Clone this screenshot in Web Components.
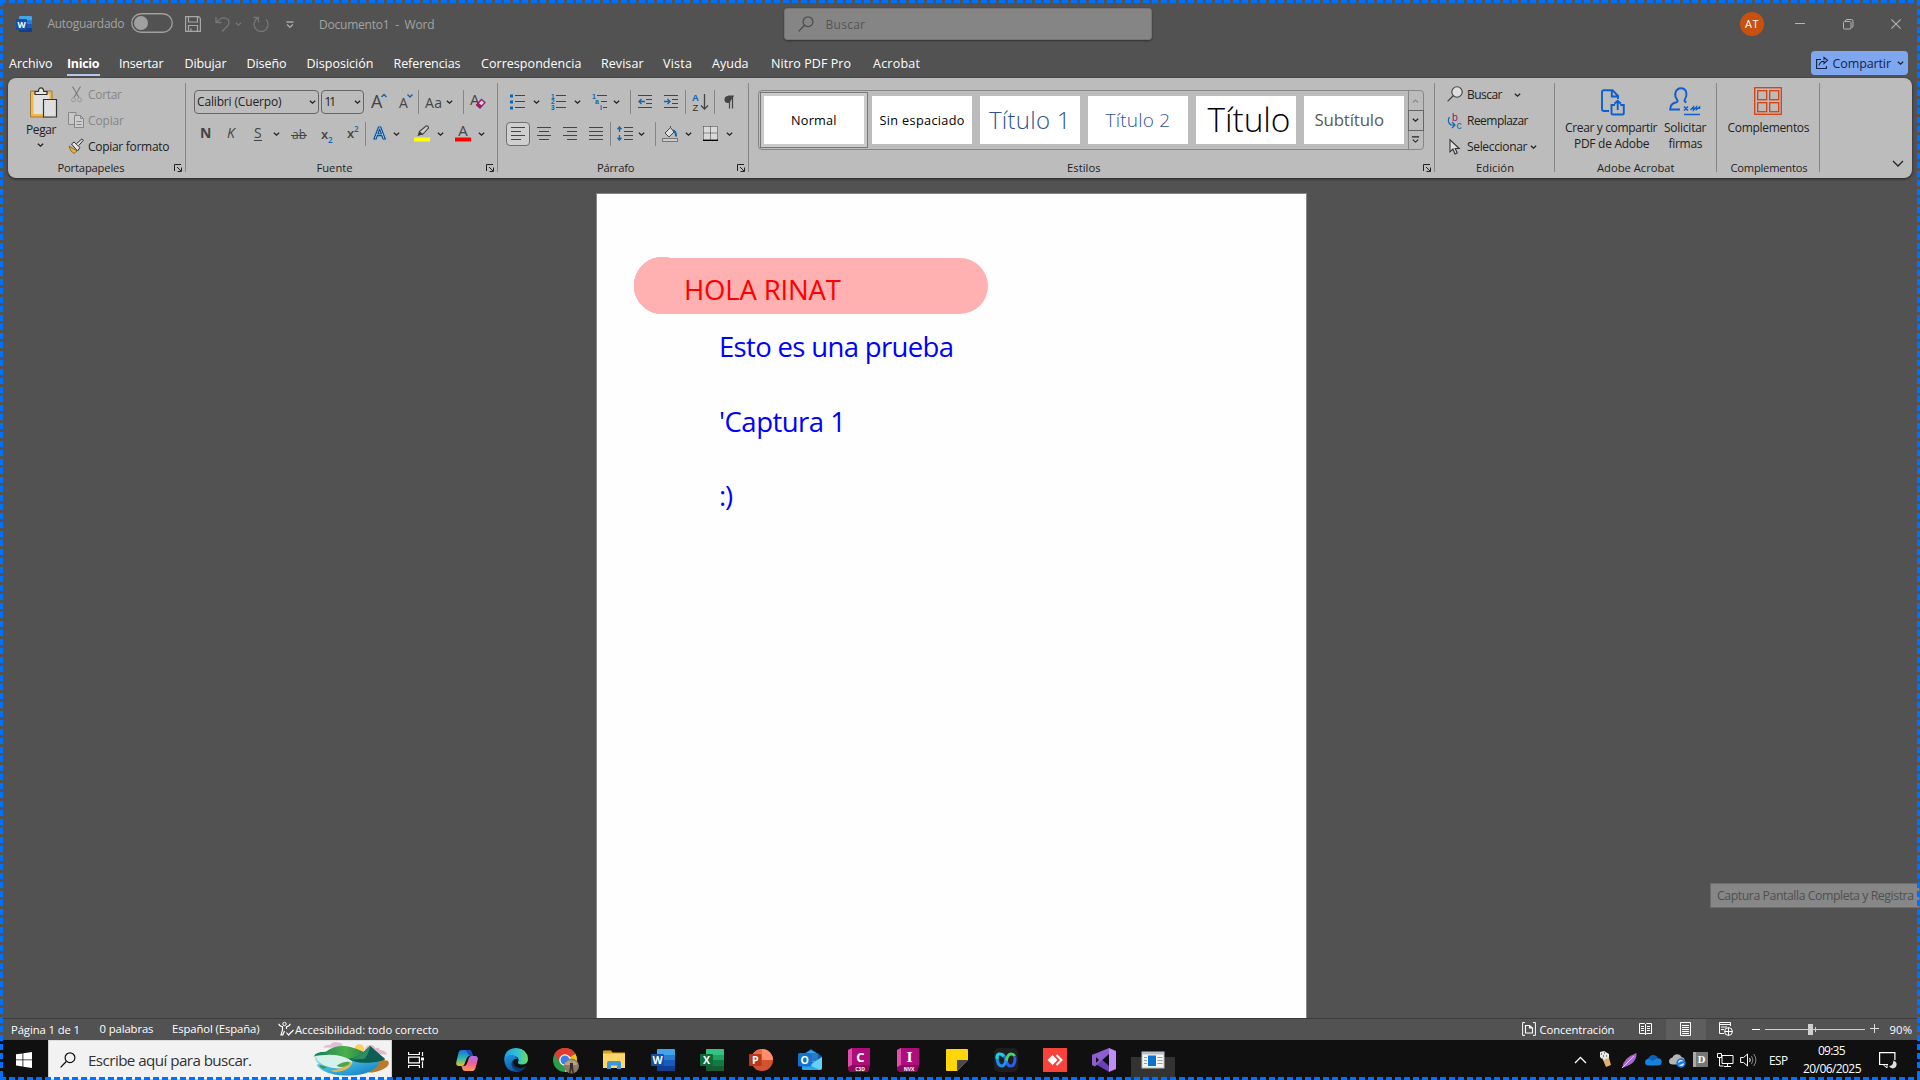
<!DOCTYPE html>
<html lang="es">
<head>
<meta charset="utf-8">
<title>Documento1 - Word</title>
<style>
html,body{margin:0;height:100%;overflow:hidden;background:#525252;font-family:"Open Sans","Noto Sans",sans-serif}
</style>
</head>
<body>
<word-desktop></word-desktop>
<script>
// ---------- text that is tracked to a given width ----------
customElements.define('ui-text', class extends HTMLElement {
  connectedCallback() {
    if (this.shadowRoot) return;
    const w = +this.getAttribute('w'), s = this.getAttribute('s') || 12;
    this.attachShadow({mode: 'open'}).innerHTML =
      `<style>:host{display:block;flex:none;width:${w}px;font-size:${s}px;line-height:1.36;white-space:nowrap}span{display:inline-block}</style><span><slot></slot></span>`;
    const sp = this.shadowRoot.querySelector('span'), n = this.textContent.length;
    const nat = sp.getBoundingClientRect().width;
    if (n > 1) sp.style.letterSpacing = ((w - nat) / (n - 1)).toFixed(3) + 'px';
  }
});

// ---------- icons ----------
const office = (dark, mid, light, lt, ch) => `<rect x="6" y="1" width="18" height="22" rx="1" fill="${mid}"/><path d="M6 2a1 1 0 0 1 1-1h16a1 1 0 0 1 1 1v5H6z" fill="${lt}"/><path d="M6 7h18v5H6z" fill="${light}"/><path d="M6 18h18v4a1 1 0 0 1-1 1H7a1 1 0 0 1-1-1z" fill="${dark}"/><rect x="0" y="6" width="13" height="12" rx="1" fill="${mid}"/><rect x="0" y="6" width="13" height="12" rx="1" fill="#000" opacity=".12"/><text x="6.5" y="15.8" font-size="10.5" font-weight="700" fill="#fff" text-anchor="middle">${ch}</text>`;
const lines = (a) => a.map(([x1, x2, y]) => `<path d="M${x1} ${y}.5H${x2}" stroke="#444"/>`).join('');
const ICONS = {
  chev: [8, 5, `<path d="M1 .8 4 3.6 7 .8" fill="none" stroke="currentColor" stroke-width="1.5"/>`],
  chevup: [8, 5, `<path d="M1 4 4 1.2 7 4" fill="none" stroke="currentColor" stroke-width="1.2"/>`],
  bigchev: [12, 7, `<path d="M1 1l5 5 5-5" fill="none" stroke="#222" stroke-width="1.3"/>`],
  traychev: [13, 8, `<path d="M1 7l5.5-5.5L12 7" fill="none" stroke="#fff" stroke-width="1.3"/>`],
  launch: [8, 8, `<path d="M.5 7V.5H7M3 3l4 4M7.5 3.5v4h-4" fill="none" stroke="#222"/>`],
  word: [24, 24, office('#103f91', '#185abd', '#2b7cd3', '#41a5ee', 'W')],
  wordsm: [16, 16, `<path d="M4 0h11q1 0 1 1v4H3V1q0-1 1-1z" fill="#41a5ee"/><path d="M3 4h13v4H3z" fill="#2b7cd3"/><path d="M3 8h13v4H3z" fill="#185abd"/><path d="M3 12h13v3q0 1-1 1H4q-1 0-1-1z" fill="#103f91"/><rect y="3" width="11" height="11" rx="1" fill="#1450a8"/><text x="5.500" y="11.500" font-size="8.500" font-weight="700" fill="#fff" text-anchor="middle">W</text>`],
  excel: [24, 24, office('#185c37', '#107c41', '#21a366', '#33c481', 'X')],
  toggle: [42, 20, `<rect x=".75" y=".75" width="40.5" height="18.5" rx="9.25" fill="none" stroke="#a0a0a0" stroke-width="1.3"/><circle cx="10" cy="10" r="7" fill="#a0a0a0"/>`],
  save: [16, 16, `<path d="M.6.6h13l1.8 1.8v13H.6zM3.5.6v5.4h9V.6M3.5 15.4V9.500h9v5.900M6 12.500v2.500" fill="none" stroke="#a8a8a8" stroke-width="1.2"/>`],
  undo: [15, 16, `<path d="M1 1v5.500h5.500M1.400 6.300C4 3 8 .8 11.500 2.500 15 4.300 14.500 8 12 10.500L7 15.500" fill="none" stroke="#777" stroke-width="1.3"/>`],
  redo: [17, 17, `<path d="M1.500 1.500h5v5M14 3.500a7 7 0 1 1-8-1.300" fill="none" stroke="#777" stroke-width="1.3"/>`],
  custom: [8, 7, `<path d="M.5 1h7M1 3.500 4 6.300 7 3.500" fill="none" stroke="#a8a8a8" stroke-width="1.3"/>`],
  mag: [16, 16, `<circle cx="10" cy="5.700" r="4.900" fill="none" stroke="currentColor" stroke-width="1.200"/><path d="M6.500 9.300.600 15.400" stroke="currentColor" stroke-width="1.300"/>`],
  magfill: [16, 16, `<circle cx="10" cy="6" r="5.200" fill="#dedede" stroke="#444" stroke-width="1.100"/><path d="M6.200 9.800.600 15.400" stroke="#444" stroke-width="1.300"/>`],
  min: [10, 10, `<path d="M0 4.500h10" stroke="#b5b5b5"/>`],
  max: [11, 11, `<path d="M2.500 2.500V2Q2.500.5 4 .5h4.500q1.500 0 1.500 1.500v5Q10 8.500 8.500 8.500M.5 3.500Q.5 2.500 1.500 2.500H6.500q1.500 0 1.500 1V9q0 1-1 1h-5.500Q.5 10 .5 9z" fill="none" stroke="#b5b5b5"/>`],
  close: [10, 10, `<path d="M.3.300 9.700 9.700M9.700.3.300 9.700" stroke="#b5b5b5" stroke-width="1.100"/>`],
  share: [12, 12, `<path d="M5 2.500H.6v9h9.800V9M3 8.500C3.500 5.500 5 4.200 8 4.200V6.500L11.500 3.300 8 .5v2.200" fill="none" stroke="#16233f" stroke-width="1.100"/>`],
  paste: [28, 31, `<path d="M2 5.500h19v23H2z" fill="#e1e1e1" stroke="#f2b84b" stroke-width="3"/><path d="M.5 4h21.500v26H.5z" fill="none" stroke="#8b6a2a" stroke-width=".8"/><path d="M5 7.500V4.500h3.500Q8.500.8 11 .8t2.700 3.700H17v3z" fill="#e6e6e6" stroke="#333" stroke-width="1.200"/><path d="M13.500 12.500h13v17.500h-13z" fill="#dedede" stroke="#333" stroke-width="1.200"/>`],
  cut: [11, 17, `<path d="M1.500.5 8 11.500M9.500.5 3 11.500" stroke="#777" stroke-width="1.100"/><circle cx="2.500" cy="13.800" r="2" fill="none" stroke="#999"/><circle cx="8.500" cy="13.800" r="2" fill="none" stroke="#999"/>`],
  copy: [16, 16, `<path d="M6.500 12.500h-6V.5h7.500v3" fill="#c8c8c8" stroke="#888"/><path d="M6.500 3.500h6l3 3v9h-9z" fill="#ccc" stroke="#888"/><path d="M12.500 3.500v3h3M8.500 9.500h5M8.500 12.500h5" fill="none" stroke="#888"/>`],
  brush: [16, 16, `<path d="M1 8 9 13 6 15.500Q2 13.500 1 8z" fill="#f0b030" stroke="#7a5a1a" stroke-width=".8"/><path d="M3.500 6 6 4l6 5.500-2.500 3.500z" fill="#e6e6e6" stroke="#333"/><path d="M8.500 5.700 14 .8l1.400 1.400-4.600 5.300" fill="#ddd" stroke="#333"/>`],
  grow: [16, 15, `<text x="0" y="14.500" font-size="18" fill="#444" textLength="11">A</text><path d="M10.500 4 13 1.500 15.500 4" fill="none" stroke="#0f64b0" stroke-width="1.400"/>`],
  shrink: [14, 15, `<text x="0" y="14.500" font-size="14" fill="#444">A</text><path d="M8.500 1.500 11 4l2.500-2.500" fill="none" stroke="#0f64b0" stroke-width="1.400"/>`],
  aa: [17, 14, `<text x="0" y="12" font-size="14" fill="#444" textLength="17">Aa</text>`],
  clear: [16, 16, `<text x="0" y="12" font-size="15" fill="#444">A</text><path d="m6.500 12 5-5.500 3.500 3-5 5.500z" fill="#d8d8d8" stroke="#9b1b6e" stroke-width="1.300"/><path d="m6.500 12 2-2.200 3.500 3-2 2.200z" fill="#9b1b6e"/>`],
  bold: [12, 14, `<text x="0" y="12" font-size="14" font-weight="700" fill="#444">N</text>`],
  ital: [12, 14, `<text x="1" y="12" font-size="14" font-style="italic" fill="#444">K</text>`],
  under: [10, 16, `<text x="1" y="12" font-size="14" fill="#444">S</text><path d="M1 14.500h8" stroke="#444"/>`],
  strike: [16, 14, `<text x="1" y="12" font-size="12" fill="#444" textLength="14">ab</text><path d="M0 8.500h16" stroke="#444"/>`],
  sub: [13, 16, `<text x="0" y="11.500" font-size="13" font-weight="600" fill="#444">x</text><text x="7" y="16" font-size="8" font-weight="600" fill="#0f64b0">2</text>`],
  sup: [13, 16, `<text x="0" y="14" font-size="13" font-weight="600" fill="#444">x</text><text x="7" y="7.500" font-size="8" font-weight="600" fill="#0f64b0">2</text>`],
  effect: [17, 16, `<text x="7.500" y="14" font-size="17" text-anchor="middle" font-weight="600" fill="#d8e8f6" stroke="#0f4f90" stroke-width="1.200" style="filter:drop-shadow(0 0 1px #7fc0f4)">A</text>`],
  hilite: [16, 17, `<rect y="12.500" width="16" height="4" fill="#ff0"/><path d="M3.500 11 5 6.500l3.500 3z" fill="#333"/><path d="M5.500 6.500 12 1q2.500-.5 2.500 2L8.500 9.500z" fill="#ccc" stroke="#444" stroke-width="1.100"/>`],
  fcolor: [16, 17, `<text x="8" y="11" font-size="15" text-anchor="middle" fill="#444">A</text><rect y="12.500" width="16" height="4" fill="#f00"/>`],
  bullets: [16, 16, `<path d="M0 .5h3v3H0zM0 6.500h3v3H0zM0 12.500h3v3H0z" fill="#0f64b0"/>` + lines([[5, 15, 1], [5, 15, 7], [5, 15, 13]])],
  numbers: [16, 16, `<g font-size="6.500" font-family="Liberation Sans" font-weight="700" fill="#0f64b0"><text x="0" y="4.500">1</text><text x="0" y="10.300">2</text><text x="0" y="16">3</text></g>` + lines([[5, 15, 1], [5, 15, 7], [5, 15, 13]])],
  multi: [16, 16, `<g font-size="7" font-family="Liberation Sans" font-weight="700" fill="#0f64b0"><text x="0" y="4.500">1</text><text x="3" y="10.300">a</text><text x="8" y="16">i</text></g>` + lines([[5, 15, 1], [9, 15, 7], [11, 15, 13]])],
  outdent: [15, 15, lines([[0, 14, 1], [8, 14, 5], [8, 14, 9], [0, 14, 13]]) + `<path d="M7 7.500H1M3.500 5 1 7.500 3.500 10" fill="none" stroke="#0f64b0" stroke-width="1.300"/>`],
  indent: [15, 15, lines([[0, 14, 1], [8, 14, 5], [8, 14, 9], [0, 14, 13]]) + `<path d="M0 7.500h6M3.500 5 6 7.500 3.500 10" fill="none" stroke="#0f64b0" stroke-width="1.300"/>`],
  sort: [17, 18, `<text x="0" y="7.500" font-size="9.500" font-family="Liberation Sans" font-weight="700" fill="#0f64b0">A</text><text x="0.500" y="17.500" font-size="9.500" font-family="Liberation Sans" fill="#333">Z</text><path d="M12.500 1v15M9 12.500l3.500 3.500 3.500-3.500" fill="none" stroke="#444" stroke-width="1.300"/>`],
  pilcrow: [11, 14, `<path d="M9.500 1H4a3.500 3.500 0 0 0 0 7h1.500" fill="#444"/><path d="M5.500 1v12.500M8.500 1v12.500M4 1h6" stroke="#444" stroke-width="1.200"/>`],
  al: [15, 15, lines([[0, 14, 1], [0, 10, 5], [0, 14, 9], [0, 10, 13]])],
  ac: [15, 15, lines([[0, 14, 1], [2, 12, 5], [0, 14, 9], [2, 12, 13]])],
  ar: [15, 15, lines([[0, 14, 1], [4, 14, 5], [0, 14, 9], [4, 14, 13]])],
  aj: [15, 15, lines([[0, 14, 1], [0, 14, 5], [0, 14, 9], [0, 14, 13]])],
  spacing: [17, 15, lines([[7, 16, 1], [7, 16, 5], [7, 16, 9], [7, 16, 13]]) + `<path d="M2.500 1v5M.5 3.200 2.500 1l2 2.200M2.500 9v5M.5 11.800l2 2.200 2-2.200" fill="none" stroke="#0f64b0" stroke-width="1.300"/>`],
  shade: [17, 16, `<rect x=".5" y="12.500" width="15" height="3" fill="#ccc" stroke="#777"/><path d="M3 7 8.500 1.500 12 6 7 11z" fill="#ddd" stroke="#444"/><path d="M8.500 1.500V0" stroke="#444"/><path d="M11 4.500q3 .5 3 6" fill="none" stroke="#0f64b0" stroke-width="2"/>`],
  borders: [15, 15, `<rect width="15" height="14" fill="#d9d9d9"/><path d="M.5.500h14v13M.5.500v13M7.500.500v13M.5 7h14" fill="none" stroke="#333" stroke-dasharray="1 1"/><path d="M0 14.300h15" stroke="#000" stroke-width="1.400"/>`],
  expand: [10, 8, `<path d="M1 1h8M2 4l3 2.800L8 4" fill="none" stroke="#222" stroke-width="1.200"/>`],
  replace: [16, 16, `<text x="5" y="7.500" font-size="10.500" font-family="Liberation Sans" fill="#8f1d6b">b</text><text x="9.500" y="15.800" font-size="10.500" font-family="Liberation Sans" fill="#0f64b0">c</text><path d="M2.500 4q-3 4.500 1.500 8h3.500M5 9l3 3-3 3" fill="none" stroke="#0f64b0" stroke-width="1.200"/>`],
  cursor: [11, 16, `<path d="M1 .8v12l3-2.800 2 5 2.200-1-2-4.500h4z" fill="#e0e0e0" stroke="#333" stroke-width="1.100"/>`],
  adobe: [24, 27, `<path d="M8 22H3Q1 22 1 20V3Q1 1.200 3 1.200h8.500L17 7v3M10.800 1.500V7.500H17M14 16h-3.500v8.500Q10.500 25.500 12 25.500h9.500q1.300 0 1.300-1V16h-3.500M16.700 21v-9M13.500 14.800l3.200-3 3.200 3" fill="none" stroke="#0b5fd0" stroke-width="1.900"/>`],
  sign: [32, 29, `<path d="M11 22.500H1.200Q1 16.500 7.500 15.200 9.500 14.500 7.800 12.200 5.500 9 6.500 5.500 7.800 1.200 12 1.200t5.300 4.300q.8 3.500-1.400 6.700-1.300 2 1.500 3.200" fill="none" stroke="#0b5fd0" stroke-width="1.900"/><path d="M15 19.500l4 4M19 19.500l-4 4M21.500 23l3-3v3l3-3v2.500l3-2.500v2M15 27.500h16" fill="none" stroke="#0b5fd0" stroke-width="1.500"/>`],
  addins: [28, 28, `<g fill="none" stroke="#d8400c" stroke-width="1.300"><rect x=".7" y=".7" width="26.600" height="26.600"/><rect x="3.700" y="3.700" width="9" height="9"/><rect x="15.700" y="3.700" width="9" height="9"/><rect x="3.700" y="15.700" width="9" height="9"/><rect x="15.700" y="15.700" width="9" height="9"/></g>`],
  access: [16, 14, `<circle cx="6.500" cy="2" r="1.700" fill="none" stroke="#fff"/><path d="M.8 1.800Q1 4.200 4.500 4.800V8L3 12.800h1.800L6.500 9M12.200 1.800Q12 4.200 8.500 4.800V7M8.500 10.500l2 2.500 5-5" fill="none" stroke="#fff" stroke-width="1.200"/>`],
  focus: [14, 14, `<path d="M3 .6H.6v12.800H3M11 .6h2.400v12.800H11" fill="none" stroke="#fff"/><path d="M3.500 3.500h4l3 2.500v5h-7zM7.500 3.500V6h3" fill="none" stroke="#fff" stroke-width="1.200"/>`],
  book: [13, 12, `<path d="M6.500 1.500v10M.5.500h5l1 1 1-1h5v10h-5l-1 1-1-1h-5zM2 3.500h3M2 5.500h3M2 7.500h3M8 3.500h3M8 5.500h3M8 7.500h3" fill="none" stroke="#fff"/>`],
  print: [11, 14, `<path d="M.5.500h10v13H.5zM2 3.500h7M2 5.500h7M2 7.500h7M2 9.500h7M2 11.500h7" fill="none" stroke="#fff"/>`],
  web: [14, 14, `<path d="M5 11.500H.5V.5h11V4M.5 2.500h11M2 5h6M2 7.500h3" fill="none" stroke="#fff"/><circle cx="9.500" cy="9.500" r="3.900" fill="#525252" stroke="#fff"/><path d="M5.600 9.500h8M9.500 5.600v8" stroke="#fff"/>`],
  minus: [8, 8, `<path d="M0 4.500h8" stroke="#fff" stroke-width="1"/>`],
  plus: [9, 9, `<path d="M0 4.500h9M4.500 0v9" stroke="#ddd"/>`],
  slider: [100, 11, `<path d="M0 5.500h100" stroke="#d0d0d0"/><path d="M50.500 3v5" stroke="#d0d0d0"/><rect x="43" width="5" height="11" fill="#d0d0d0"/>`],
  start: [16, 16, `<path d="M0 2.300 6.500 1.400V7.500H0zM7.300 1.300 16 0v7.500H7.300zM0 8.300h6.500v6.200L0 13.600zM7.300 8.300H16V16l-8.700-1.300z" fill="#fff"/>`],
  taskview: [16, 16, `<path d="M.6 0v2.500h10.800V0M.6 16v-2.500h10.800V16M.6 5.200h10.800v5.600H.6zM14.500 0v4M14.500 9.500V16" fill="none" stroke="#fff" stroke-width="1.200"/><rect x="13" y="5.500" width="3" height="3" fill="#fff"/>`],
  island: [78, 36, `<defs><linearGradient id="a" x2="1" y2="1"><stop stop-color="#bfe8ea"/><stop offset=".45" stop-color="#3fb4de"/><stop offset="1" stop-color="#0b78c0"/></linearGradient><linearGradient id="b" x2="1"><stop stop-color="#0f7a5a"/><stop offset=".45" stop-color="#4bb04a"/><stop offset="1" stop-color="#0a5a4a"/></linearGradient></defs>
   <circle cx="47" cy="8" r="4.800" fill="#ffcf5a"/><path d="M10 6.500q3-3.500 7-2.500 3-4 8-2.500 5 0 5 3 3 .5 4 2.500z" fill="#e3bcd8"/><path d="M52 9q2-5 6-5 4 0 5 3 4-1 5 2 6 .5 7 5l-12-1z" fill="#e3b8cc"/>
   <path d="M62 18 76 20q3 4-4 8-8 4-16 4l4-12z" fill="#b97a2a"/>
   <path d="M2 15Q1 20 6 23q-3 1-2 2 8 9 28 10 22 0 30-7 6-3 4-8L40 17z" fill="url(#a)"/>
   <path d="M3 14.500q13-2 26 1.500 10 2 11 6-8 8-21 5Q4 24 3 14.500z" fill="#d6f0ea"/>
   <path d="M1 16Q2 11 13 11q10-8 25-5 8 2 13 5l7-6q9 8 15 13-8 4-22 4-8 0-13-3-10-5-21-5-10 0-17 2z" fill="url(#b)"/>
   <path d="M36 18q12-1 22-13l15 14q-8 3-20 3-11 0-17-4z" fill="#0d5e55"/><path d="M58 5q-2 9-6 13l-14 1Q50 14 58 5z" fill="#2c8f62"/>
   <path d="M25 25q6-4 12-4 3 0 2 3-3 5-12 7-7 1-9-1 10-1 12-4z" fill="#e4b65a"/><path d="M24 25q5-4 12-4 2 1 0 3-5 3-10 2z" fill="#4aa64a"/><path d="M6 24q5 1 9 3l-5 1q-3-1-4-4z" fill="#2f9a58"/>`],
  copilot: [22, 21, `<defs><linearGradient id="c" x2="0" y2="1"><stop stop-color="#1b6fe0"/><stop offset=".5" stop-color="#27b8b0"/><stop offset="1" stop-color="#e8c320"/></linearGradient><linearGradient id="d" x2="0" y2="1"><stop stop-color="#b06df0"/><stop offset=".5" stop-color="#f0609a"/><stop offset="1" stop-color="#ff9a4a"/></linearGradient></defs><path d="M5 0h8q2 0 2.500 2L17 6h-3.500q-2 0-2.700 2L8.500 14Q8 16 6 16H3Q-.5 16 .3 12L2.500 3Q3.200 0 5 0z" fill="url(#c)"/><path d="M17 21H9q-2 0-2.600-2L5.500 16H8q2 0 2.700-2L13 8q.6-2 2.500-2H19q3.500 0 2.700 4L19.500 18q-.8 3-2.500 3z" fill="url(#d)"/><path d="M9.500 0H13q2 0 2.500 2L17 6h-3.500z" fill="#1c4bb8"/>`],
  edge: [24, 24, `<defs><linearGradient id="e" x2="1"><stop stop-color="#1fa0e8"/><stop offset=".6" stop-color="#35c3d0"/><stop offset="1" stop-color="#6fdc50"/></linearGradient><linearGradient id="f" x2=".6" y2="1"><stop stop-color="#1f9ae0"/><stop offset="1" stop-color="#0c4d9c"/></linearGradient></defs><path d="M.3 10Q2 0 12.500 0 23.500 1 24 11q0 5.500-6.500 5.500-4 0-3.500-2.500 1.500-3-1-5Q9 6.500 4.500 8 1.500 9 .3 10z" fill="url(#e)"/><path d="M.1 11Q1 7 6.500 7q5.500 0 7 4-4.500-1-4.500 4 .5 5 6.500 5.500 3.500 0 6.300-2Q18 24 12 24 1 23.500.1 11z" fill="url(#f)"/><path d="M9.800 11.500q-3.300 3-1.800 7 2.500 4.500 8 4.500 4-1.500 6-4.500-3 1.500-6.500 1.500-6-1-6.500-5.500z" fill="#0a3672"/>`],
  chrome: [26, 26, `<circle cx="12" cy="12" r="12" fill="#2a9d4b"/><path d="M12 12 1.600 6A12 12 0 0 1 22.400 6z" fill="#e33b2e"/><path d="M12 12h0L22.400 6A12 12 0 0 1 12 24z" fill="#fbc116"/><path d="M12 6h10.400A12 12 0 0 0 1.600 6L7 15z" fill="#e33b2e"/><circle cx="12" cy="12" r="5.800" fill="#fff"/><circle cx="12" cy="12" r="4.500" fill="#3b7ded"/><circle cx="18.500" cy="18" r="7.500" fill="#8c7a66"/><path d="M12 15q6-6 12 0v2H12z" fill="#b3a590"/><path d="M17 15h3v4l1 6h-1.500l-1-4-1 4H16l1-6z" fill="#3b2a24"/><circle cx="18.500" cy="13.600" r="1.200" fill="#d77b3a"/>`],
  folder: [22, 19, `<path d="M0 1.500Q0 .5 1 .5h7l1.500 2H22V18H0z" fill="#e0a010"/><path d="M0 3.500h22V18H0z" fill="#ffd667"/><path d="M4 19v-6q0-2 2-2h10q2 0 2 2v6h-4v-3.500H8V19z" fill="#3d98dc"/>`],
  ppt: [24, 24, `<circle cx="13" cy="12" r="11" fill="#d35230"/><path d="M13 1a11 11 0 0 1 11 11H13z" fill="#ff8f6b"/><path d="M13 1A11 11 0 0 0 2 12h11z" fill="#ed6c47"/><rect y="6" width="12.500" height="12" rx="1" fill="#b8391a"/><text x="6.200" y="15.800" font-size="10.500" font-weight="700" fill="#fff" text-anchor="middle">P</text>`],
  outlook: [24, 24, `<path d="m3 8 10-7 10.500 7v5L13 18 3 13z" fill="#0f5fae"/><path d="M6 6 13 2l7 4v8H6z" fill="#32a7ea"/><path d="M13 5h8v8h-8z" fill="#1a4fa0" opacity=".5"/><path d="M24 9v11q0 2-2 2H6q-2 0-2-2l9-4z" fill="#5fd2f5"/><path d="m4 14 18 8H6q-2 0-2-2z" fill="#2fa4e8"/><rect y="5" width="13.500" height="13.500" rx="1.500" fill="#1173cf"/><text x="6.800" y="15.500" font-size="10.500" font-weight="700" fill="#fff" text-anchor="middle">O</text>`],
  c3d: [22, 24, `<path d="M0 2 4 0h18v18l-2 6H2L0 22z" fill="#8a0a5e"/><path d="M4 0h18v17H4z" fill="#b00d7c"/><path d="m0 2 4-2v17l-4 2z" fill="#e04fae"/><text x="12.500" y="13.500" font-size="13" font-weight="700" fill="#fff" text-anchor="middle">C</text><text x="12" y="22.500" font-size="5" font-weight="700" fill="#fff" text-anchor="middle">C3D</text>`],
  inv: [22, 24, `<path d="M0 2 4 0h18v18l-2 6H2L0 22z" fill="#8a0a5e"/><path d="M4 0h18v17H4z" fill="#b00d7c"/><path d="m0 2 4-2v17l-4 2z" fill="#e04fae"/><text x="12.500" y="13.500" font-size="13" font-family="DejaVu Serif" font-weight="700" fill="#fff" text-anchor="middle">I</text><text x="12" y="22.500" font-size="5" font-weight="700" fill="#fff" text-anchor="middle">NVX</text>`],
  sticky: [22, 22, `<path d="M0 1q0-1 1-1h20q1 0 1 1v10L11 22H1q-1 0-1-1z" fill="#ffd60a"/><path d="M11 11h11L11 22z" fill="#4a4a4a"/>`],
  webex: [24, 24, `<rect width="24" height="24" rx="5" fill="#1e1e1e"/><path d="M21 8.500q.5 9.500-4.500 9.500-3 0-4.500-5.500T8 6" fill="none" stroke="#2f5cf0" stroke-width="3"/><path d="M12 13.500q1.500-7.500 5-7.500 2.500 0 3.800 2" fill="none" stroke="#45d468" stroke-width="3"/><path d="M3 7.500Q3 18 7.800 18q2.700 0 4.200-5.500" fill="none" stroke="#1c8ff0" stroke-width="3"/><path d="M3.200 11Q2.500 6.500 5 6q3-.5 4.500 2.500" fill="none" stroke="#1ccfd8" stroke-width="3"/>`],
  anydesk: [24, 24, `<rect width="24" height="24" fill="#f8423a"/><path d="m4.500 12 5-5 5 5-5 5z" fill="#fff"/><path d="m13.500 7 5 5-5 5" fill="none" stroke="#fff" stroke-width="2"/>`],
  vs: [24, 24, `<path d="M0 7 3 5.500 17 18v6L2 15z" fill="#6b3fb5"/><path d="M0 7v10l3 1.500L17 6V0z" fill="#8b5fd0"/><path d="M4 9v6l3-3z" fill="#101010"/><path d="m17 0 7 3v18l-7 3z" fill="#c08df5"/><path d="M17 8v8l-5-4z" fill="#101010"/>`],
  appwin: [22, 16, `<rect width="22" height="16" fill="#f4f4f4" stroke="#bbb"/><path d="M0 0h22v2.500H0z" fill="#b9c0c6"/><rect x="6" y="3.500" width="8" height="10.500" fill="#0b73d0"/><path d="M2 5.500h3M2 8.500h3M2 11.500h3M15.500 5.500h5M15.500 8.500h5M15.500 11.500h5" stroke="#999"/>`],
  tray1: [14, 16, `<path d="M2 1 6 0l5 3v6l-5 1-4-4z" fill="#e9e9e9"/><path d="M3 3h1M6 2h1M5 5h1M8 5h1M4 8h1" stroke="#222"/><path d="M5 9 11 7l2 7-5 2z" fill="#e0b070"/>`],
  feather: [15, 15, `<path d="M0 15Q1 5 14.500 0 15 7 9 11 5 13.500 0 15z" fill="#a66bd0"/><path d="M0 15 12 3" stroke="#e0c0f5"/>`],
  onedrive: [17, 11, `<path d="M4 10.500Q0 10.500 0 7q.5-3 3.500-3.500Q5 .2 8.500.3q3 .2 4.200 3 4 .2 4 3.700-.3 3.500-4 3.500z" fill="#1583dc"/><path d="M3.500 3.500Q5 .2 8.500.3q3 .2 4.200 3L7 6z" fill="#0f5fb8"/>`],
  sync: [17, 14, `<path d="M4 10.500Q0 10.500 0 7q.5-3 3.500-3.500Q5 .2 8.500.3q3 .2 4.200 3 3 .2 3 3.700-.3 3.500-4 3.500z" fill="#b5b5b5"/><circle cx="12" cy="9" r="4.700" fill="#1b78d8"/><path d="M9.500 8.500q1-2.500 4-1.500M14.500 9.500q-1 2.500-4 1.500" fill="none" stroke="#fff" stroke-width="1.200"/>`],
  dtray: [15, 15, `<rect width="15" height="15" fill="#777"/><path d="M0 0h3v15H0z" fill="#aaa"/><text x="8.500" y="11" font-size="9" font-family="DejaVu Serif" font-weight="700" fill="#fff" text-anchor="middle">D</text>`],
  net: [17, 15, `<path d="M5 2.500h11v8H5zM10.500 10.500V13M7 13.500h7M.5.500h4v4h-4zM2.500 5v8h4" fill="none" stroke="#fff"/>`],
  speaker: [17, 14, `<path d="M.6 4.500h3L7.500 1v12L3.600 9.500h-3z" fill="none" stroke="#fff"/><path d="M9.500 5q1.500 2 0 4" fill="none" stroke="#fff"/><path d="M11.500 3q3 4 0 8M13.700 1q4.500 6 0 12" fill="none" stroke="#888"/>`],
  notif: [17, 17, `<path d="M9 12.500H.6V.6h15.300V8" fill="none" stroke="#fff" stroke-width="1.200"/><path d="M4 12.500 8 16v-3.500" fill="none" stroke="#fff"/><path d="M14.500 8.500a4 4 0 1 1-4.500 5.500q4 0 4.500-5.500z" fill="#ddd"/>`]
};
customElements.define('ui-icon', class extends HTMLElement {
  connectedCallback() {
    if (this.shadowRoot) return;
    const [vw, vh, body] = ICONS[this.getAttribute('n')], w = +this.getAttribute('w') || vw;
    this.attachShadow({mode: 'open'}).innerHTML =
      `<style>:host{display:block;flex:none;width:${w}px;height:${vh * w / vw}px}svg{display:block;overflow:visible}</style><svg width="${w}" height="${vh * w / vw}" viewBox="0 0 ${vw} ${vh}">${body}</svg>`;
  }
});

// ---------- row builders: every item flows after the previous one ----------
const T = (x, x2, t, s = 12, o = {}) => ({x: x - .5, w: x2 - x + 1.5, html: m => `<ui-text w="${x2 - x + 1.5}" s="${s}" style="${m};margin-top:${(o.dy || 0) * 2}px;color:${o.c || 'inherit'};font-weight:${o.b || 'inherit'}">${t}</ui-text>`});
const I = (x, n, o = {}) => { const w = o.w || ICONS[n][0]; return {x, w, html: m => `<ui-icon n="${n}" w="${w}" style="${m};margin-top:${(o.dy || 0) * 2}px;color:${o.c || '#222'}"></ui-icon>`}; };
const B = (x, w, h, css, inner = '') => ({x, w, html: m => `<div style="${m};flex:none;box-sizing:border-box;width:${w}px;height:${h}px;${css}">${inner}</div>`});
const S = x => B(x, 1, 24, 'background:#868686');
const row = (x0, h, items, css = '') => { let p = x0; return `<div class="row" style="height:${h}px;${css}">` + items.map(i => { const m = i.x - p; p = i.x + i.w; return i.html(`margin-left:${+m.toFixed(2)}px`); }).join('') + '</div>'; };
const base = `<style>:host{display:block;flex:none}.row{display:flex;align-items:center;flex:none}.col{display:flex;flex-direction:column;flex:none}</style>`;
const def = (name, fn) => customElements.define(name, class extends HTMLElement {
  connectedCallback() { if (!this.shadowRoot) this.attachShadow({mode: 'open'}).innerHTML = base + fn(this); }
});

def('title-bar', () => `<style>:host{color:#a3a3a3}</style>` + row(0, 48, [
  I(16, 'wordsm'), T(48, 123.5, 'Autoguardado', 12), I(131, 'toggle', {dy: -1}), I(185, 'save'), I(215, 'undo'), I(235, 'chev', {c: '#777', w: 7}), I(252, 'redo', {dy: .5}), I(285.500, 'custom'),
  T(319.500, 433.500, 'Documento1&nbsp; -&nbsp; Word', 12, {dy: 1}),
  B(784, 368, 32, 'background:#858585;border:1px solid #757575;border-radius:3px;box-shadow:0 1px 2px #333;color:#555', row(785, 30, [I(798, 'mag', {c: '#4a4a4a'}), T(826, 864, 'Buscar', 12, {dy: 1})])),
  B(1740, 24, 24, 'background:#ca5010;border-radius:50%;color:#fff', row(1740, 24, [T(1745.500, 1757.500, 'AT', 11)])),
  I(1795, 'min'), I(1843, 'max'), I(1891, 'close')
]));

def('tab-strip', () => `<style>:host{color:#fff}</style>` + row(0, 30, [
  T(9.500, 51.500, 'Archivo', 12.500, {dy: .5}),
  {x: 67, w: 33, html: m => `<div class="col" style="${m};width:33px;height:24px;box-sizing:border-box;padding-top:3px;margin-top:1px;border-bottom:2px solid #b4c7ee"><ui-text w="32.5" s="12.5" style="font-weight:700">Inicio</ui-text></div>`},
  ...[[119.500, 162.500, 'Insertar'], [185, 225.500, 'Dibujar'], [247, 285.500, 'Diseño'], [307, 372.500, 'Disposición'], [394, 459.500, 'Referencias'], [481.500, 580.500, 'Correspondencia'], [601.500, 642.500, 'Revisar'], [663.500, 691, 'Vista'], [712.500, 747.500, 'Ayuda'], [771.500, 850, 'Nitro PDF Pro'], [873.500, 919, 'Acrobat']].map(a => T(...a, 12.500, {dy: .5})),
  B(1811, 97, 24, 'background:#7fa7f0;border-radius:4px;color:#16233f', row(1811, 24, [I(1816, 'share'), T(1833, 1890, 'Compartir', 12.500), I(1897, 'chev', {w: 7})]))
]));

const foot = (x0, x1, x2, t, l) => row(x0, 16, [T(x1, x2, t, 11.200)].concat(l ? [I(l, 'launch')] : []));
const group = (x0, xe, body, f) => `<div class="col" style="width:${xe - x0}px;height:100px;box-sizing:border-box;padding-top:4px">${body}<div style="flex:1"></div>${f}<div style="height:2px"></div></div><div style="flex:none;width:1px;height:89px;margin-top:5px;background:#868686"></div>`;

const card = (x, x1, x2, t, s, o) => B(x, 100, 48, 'background:#fff;' + (o.sel ? 'box-shadow:0 0 0 3px #cacaca,0 0 0 4px #777;' : ''), row(x, 48, [T(x1, x2, t, s, o)]));

def('ribbon-panel', () => `<style>:host{margin:0 8px;height:100px;border-radius:8px;background:#bcbcbc;color:#222;box-shadow:0 1px 3px #222;display:flex}</style>` +
  group(8, 185,
    `<div class="row" style="align-items:flex-start"><div class="col" style="width:60px">
      ${row(8, 42, [I(30, 'paste', {dy: -.5})])}${row(8, 14, [T(26.500, 55.500, 'Pegar', 12, {dy: -1})])}${row(8, 14, [I(37, 'chev', {w: 7})])}</div>
     <div class="col">${row(68, 26, [I(71, 'cut', {dy: -.5}), T(88.500, 121, 'Cortar', 12, {c: '#868686'})])}${row(68, 26, [I(68, 'copy', {dy: -1}), T(88.500, 123, 'Copiar', 12, {c: '#868686'})])}${row(68, 26, [I(68, 'brush', {dy: -1}), T(88.500, 168.500, 'Copiar formato')])}</div></div>`,
    foot(8, 58, 123.500, 'Portapapeles', 174)) +
  group(186, 497,
    row(186, 32, [
      B(194, 125, 24, 'border:1px solid #666;border-radius:4px', row(195, 22, [T(197.500, 280.500, 'Calibri (Cuerpo)'), I(309, 'chev', {w: 7})])),
      B(321, 43, 24, 'border:1px solid #666;border-radius:4px', row(322, 22, [T(325, 335, '11'), I(354, 'chev', {w: 7})])),
      I(371, 'grow', {dy: -1.500}), I(399, 'shrink', {dy: -1.500}), S(418), I(425, 'aa', {dy: .5}), I(446, 'chev', {w: 7}), S(463), I(470, 'clear', {dy: -1})], 'margin-top:4px') +
    row(186, 32, [I(200, 'bold', {dy: -1}), I(226, 'ital', {dy: -1}), I(252.500, 'under'), I(273, 'chev', {w: 7}), I(291, 'strike'), I(321, 'sub', {dy: .5}), I(347, 'sup', {dy: -2}), S(365), I(372, 'effect', {dy: -1}), I(393, 'chev', {w: 7}), I(414, 'hilite', {dy: -.5}), I(437, 'chev', {w: 7}), I(455, 'fcolor', {dy: -.5}), I(478, 'chev', {w: 7})]),
    foot(186, 317, 351.500, 'Fuente', 486)) +
  group(498, 748,
    row(498, 32, [I(510, 'bullets'), I(533, 'chev', {w: 7}), I(551, 'numbers'), I(574, 'chev', {w: 7}), I(592, 'multi'), I(613, 'chev', {w: 7}), S(630), I(638, 'outdent', {dy: -.5}), I(664, 'indent', {dy: -.5}), S(685), I(692, 'sort'), S(714), I(723.500, 'pilcrow')], 'margin-top:4px') +
    row(498, 32, [B(506, 24, 24, 'border:1px solid #6e6e6e;border-radius:4px;background:#cfcfcf', row(507, 22, [I(511, 'al', {dy: -.5})])), I(537, 'ac', {dy: -.5}), I(563, 'ar', {dy: -.5}), I(589, 'aj', {dy: -.5}), S(610), I(617, 'spacing', {dy: -.5}), I(638, 'chev', {w: 7}), S(655), I(662, 'shade', {dy: -.5}), I(685, 'chev', {w: 7}), I(703, 'borders', {dy: -.5}), I(726, 'chev', {w: 7})]),
    foot(498, 597.500, 633.500, 'Párrafo', 737)) +
  group(749, 1434,
    row(749, 60, [
      B(758, 666, 60, 'border:1px solid #868686;border-radius:4px', row(759, 58, [
        card(764, 791.500, 835.500, 'Normal', 12.700, {sel: 1, c: '#000', dy: .5}), card(872, 880, 963.500, 'Sin espaciado', 12.700, {c: '#000', dy: .5}),
        card(980, 989.500, 1069.500, 'Título 1', 24, {c: '#2f5496', b: 300}), card(1088, 1106, 1169, 'Título 2', 19, {c: '#2f5496', b: 300, dy: 1}),
        card(1196, 1208, 1289.500, 'Título', 33.500, {c: '#000', b: 300}), card(1304, 1315, 1383, 'Subtítulo', 16.800, {c: '#5a5a5a', dy: .5}),
        {x: 1408, w: 15, html: m => `<div class="col" style="${m};width:15px;height:58px;border-left:1px solid #868686;box-sizing:border-box">${row(1409, 20, [I(1412, 'chevup', {w: 7, c: '#888'})])}${row(1409, 19, [I(1412, 'chev', {w: 7})], 'box-shadow:0 0 0 1px #666')}${row(1409, 19, [I(1411, 'expand', {w: 9})])}</div>`}
      ]))], 'margin-top:8px'),
    foot(749, 1067.500, 1099.500, 'Estilos', 1423)) +
  group(1435, 1554,
    row(1435, 26, [I(1447, 'magfill', {dy: -1}), T(1467.500, 1501.500, 'Buscar'), I(1514, 'chev', {w: 7})]) +
    row(1435, 26, [I(1447, 'replace', {dy: -.5}), T(1467.500, 1527.500, 'Reemplazar')]) +
    row(1435, 26, [I(1448.500, 'cursor', {dy: -.5}), T(1467.500, 1526.500, 'Seleccionar'), I(1530, 'chev', {w: 7})]),
    foot(1435, 1476.500, 1513, 'Edición')) +
  group(1555, 1716,
    row(1555, 38, [I(1601, 'adobe', {dy: 1.500}), I(1669, 'sign')]) +
    row(1555, 16, [T(1565.500, 1656.500, 'Crear y compartir'), T(1664.500, 1705.500, 'Solicitar')]) +
    row(1555, 16, [T(1574.500, 1648.500, 'PDF de Adobe'), T(1669, 1701.500, 'firmas')]),
    foot(1555, 1597.500, 1673.500, 'Adobe Acrobat')) +
  group(1717, 1819,
    row(1717, 38, [I(1754, 'addins')]) + row(1717, 16, [T(1728, 1808.500, 'Complementos')]),
    foot(1717, 1731, 1806.500, 'Complementos')) +
  `<div class="col" style="justify-content:flex-end;padding-bottom:11px;margin-left:72px"><ui-icon n="bigchev"></ui-icon></div>`);

def('doc-canvas', () => `<style>:host{height:840px;box-sizing:border-box;padding:15px 0 0 596px;position:relative;overflow:hidden}
  .page{width:709px;height:825px;background:#fefefe;border:1px solid #868686;border-bottom:0;display:flex;flex-direction:column;align-items:flex-start}
  .mark{margin:63px 0 0 37px;width:354px;height:57px;background:radial-gradient(circle at 28.5px 28.5px,#ffb0b0 28.5px,#0000 29px) no-repeat;display:flex;align-items:center}
  .mark i{flex:none;width:354px;height:56px;margin-top:1px;border-radius:28px;background:#ffb0b0;font-style:normal;display:flex;align-items:center;color:red;padding-left:50px;box-sizing:border-box}
  .ln{color:#00f;margin-left:122px;height:38px}
  .tip{position:absolute;left:1710px;top:705px;width:210px;height:25px;border:1px solid #6d6d6d;background:#878787;color:#505050;box-sizing:border-box;display:flex;align-items:center;padding:2px 0 0 6px}
  </style><div class="page"><div class="mark"><i><ui-text w="157" s="27.500" style="margin-top:8px">HOLA RINAT</ui-text></i></div>
  <div class="ln" style="margin-top:14px"><ui-text w="235" s="27.500">Esto es una prueba</ui-text></div>
  <div class="ln" style="margin-top:37px"><ui-text w="127" s="27.500">'Captura 1</ui-text></div>
  <div class="ln" style="margin-top:36px"><ui-text w="14" s="27.500">:)</ui-text></div></div>
  <div class="tip"><ui-text w="197" s="12.3">Captura Pantalla Completa y Registra</ui-text></div>`);

def('status-bar', () => `<style>:host{border-top:1px solid #3c3c3c;color:#fff;font-weight:500}</style>` + row(0, 21, [
  T(11.500, 79, 'Página 1 de 1', 11.300, {dy: .5}), T(100, 152.500, '0 palabras', 11.300, {dy: -.5}), T(172.500, 258.500, 'Español (España)', 11.300, {dy: -.5}), I(278, 'access', {dy: -.5}), T(295.500, 437.500, 'Accesibilidad: todo correcto', 11.300, {dy: .5}),
  I(1522, 'focus', {dy: -.5}), T(1540, 1613.500, 'Concentración', 11.300, {dy: .5}), I(1639, 'book', {dy: -1}),
  B(1666, 40, 21, 'background:#5e5e5e', row(1666, 21, [I(1680, 'print', {dy: -.5})])), I(1719, 'web', {dy: -.5}), I(1752, 'minus', {dy: -.5}), I(1765, 'slider'), I(1870, 'plus', {dy: -1}), T(1890, 1911, '90%', 11.300, {dy: .5})
]));

def('task-bar', () => `<style>:host{background:#101010;color:#fff}</style>` + row(0, 40, [
  I(16, 'start'),
  B(48, 344, 40, 'background:#f2f2f2;color:#333;border:1px solid #ccc;border-top-color:#ddd', row(49, 38, [I(60, 'mag', {c: '#111', dy: -.5}), T(88.500, 251, 'Escribe aquí para buscar.', 15.200, {dy: .5}), I(313, 'island', {w: 77, dy: -1})])),
  I(408, 'taskview'), I(456, 'copilot'), I(504, 'edge'), I(553, 'chrome', {dy: .5}), I(603, 'folder', {dy: -.5}), I(651, 'word'), I(700, 'excel'), I(749, 'ppt'), I(798, 'outlook'), I(848, 'c3d'), I(897, 'inv'), I(946, 'sticky'), I(994, 'webex'), I(1043, 'anydesk'), I(1092, 'vs'),
  B(1131, 44, 40, 'background:linear-gradient(#0000 17px,#333 17px)', row(1131, 40, [I(1142, 'appwin')])),
  I(1574, 'traychev'), I(1598, 'tray1', {dy: -1}), I(1622, 'feather'), I(1645, 'onedrive'), I(1669, 'sync', {dy: 1}), I(1693, 'dtray', {dy: -.5}), I(1717, 'net', {dy: .5}), I(1740, 'speaker'), T(1769.500, 1787, 'ESP', 11.800),
  {x: 1803, w: 59, html: m => `<div class="col" style="${m};width:59px">${row(1803, 18, [T(1818.500, 1844.500, '09:35', 12)])}${row(1803, 18, [T(1803.500, 1860.500, '20/06/2025', 12)])}</div>`},
  I(1879, 'notif', {dy: .5})
]));

// dashed selection border around the whole screen
def('capture-frame', () => `<style>:host{position:fixed;inset:0;pointer-events:none;
  --h:repeating-linear-gradient(90deg,#0070ff 0 6px,#0000 6px 9px);--v:repeating-linear-gradient(#0070ff 0 6px,#0000 6px 9px);
  background:var(--h) 0 0/100% 3px no-repeat,var(--h) 0 100%/100% 3px no-repeat,var(--v) 0 0/3px 100% no-repeat,var(--v) 100% 0/3px 100% no-repeat}</style>`);

def('word-desktop', () => `<style>:host{display:flex;flex-direction:column;width:1920px;height:1080px;background:#525252}</style>
  <title-bar></title-bar><tab-strip></tab-strip><ribbon-panel></ribbon-panel><doc-canvas></doc-canvas><status-bar></status-bar><task-bar></task-bar><capture-frame></capture-frame>`);
</script>
</body>
</html>
